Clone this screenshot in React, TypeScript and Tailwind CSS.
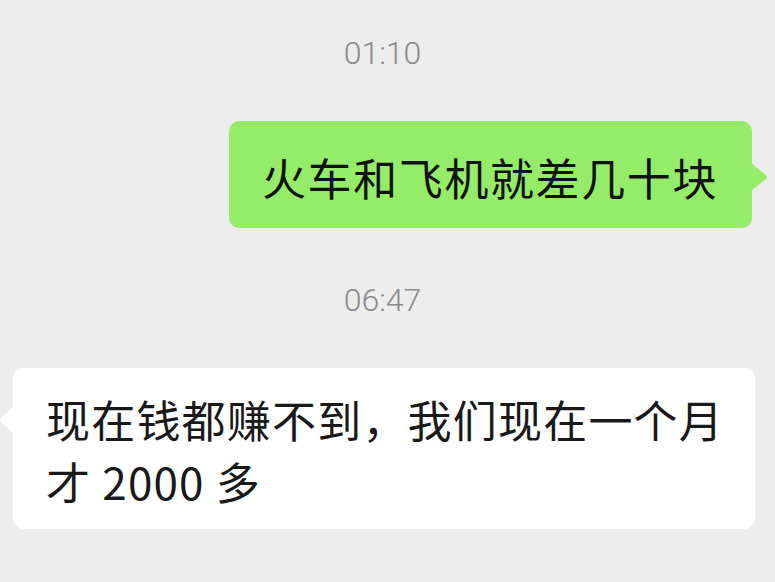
import React from "react";

const cjk = { fontFamily: '"Noto Sans CJK SC", "Noto Sans", sans-serif' };
const ts = { fontFamily: 'Roboto, "Noto Sans", sans-serif' };

export default function App() {
  return (
    <div className="w-[775px] h-[582px] bg-[#ededed] overflow-hidden flex flex-col" style={cjk}>
      <div className="mt-[33px] h-[40px] flex items-center justify-center text-[32px] font-light text-[#8a8a8a] pr-[10px]" style={ts}>
        01:10
      </div>
      <div className="mt-[48px] flex justify-end pr-[23px]">
        <div className="relative w-[523px] h-[107px] bg-[#95ec69] rounded-[10px] pl-[33px] flex items-center">
          <span className="text-[44px] leading-[62px] text-[#111111] tracking-[1.6px] mt-[4px]">火车和飞机就差几十块</span>
          <svg className="absolute right-[-17px] top-[42px]" width="18" height="28" viewBox="0 0 18 28">
            <path d="M0 0 L15 12 Q17 14 15 16 L0 28 Z" fill="#95ec69" />
          </svg>
        </div>
      </div>
      <div className="mt-[52px] h-[40px] flex items-center justify-center text-[32px] font-light text-[#8a8a8a] pr-[10px]" style={ts}>
        06:47
      </div>
      <div className="mt-[48px] flex justify-start pl-[13px]">
        <div className="relative w-[742px] h-[161px] bg-white rounded-[10px] pl-[33px] pr-[10px] pt-[20px]">
          <div className="text-[44px] leading-[62px] text-[#191919] tracking-[1.2px]">
            现在钱都赚不到，我们现在一个月才 2000 多
          </div>
          <svg className="absolute left-[-13px] top-[38px]" width="14" height="28" viewBox="0 0 14 28">
            <path d="M14 0 L1 12 Q-1 14 1 16 L14 28 Z" fill="#ffffff" />
          </svg>
        </div>
      </div>
    </div>
  );
}
